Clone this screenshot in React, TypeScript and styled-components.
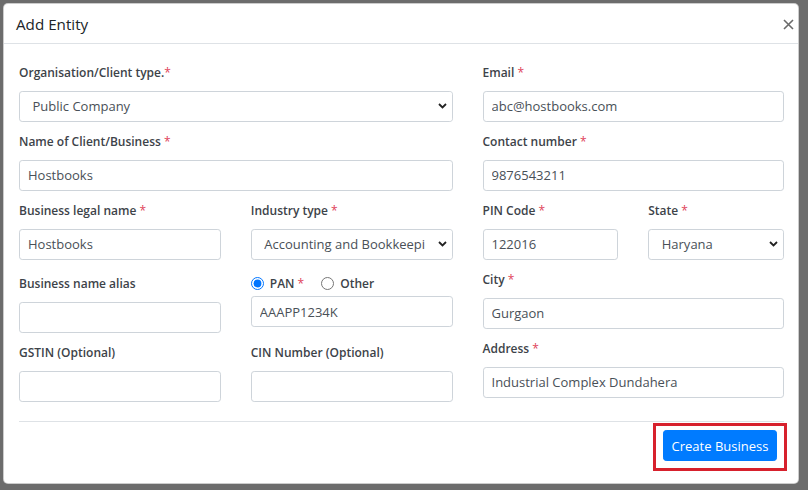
import React, { useState } from 'react';
import styled, { createGlobalStyle } from 'styled-components';

const GlobalStyle = createGlobalStyle`
  html, body {
    margin: 0;
    padding: 0;
    background: #6c6c6c;
  }
  * {
    box-sizing: border-box;
  }
`;

const FONT = `"Open Sans", "Noto Sans", "Liberation Sans", sans-serif`;

const Backdrop = styled.div`
  width: 808px;
  height: 490px;
  padding: 3px 0 0 3px;
  background: #6c6c6c;
  font-family: ${FONT};
  overflow: hidden;
`;

const Modal = styled.div`
  width: 796px;
  background: #fff;
  border: 1px solid rgba(0, 0, 0, 0.2);
  border-radius: 5px;
  color: #212529;
`;

const Header = styled.div`
  display: flex;
  align-items: center;
  justify-content: space-between;
  padding: 8px 0 7px 12px;
  border-bottom: 1px solid #dee2e6;
`;

const Title = styled.h5`
  margin: 0;
  font-size: 15.2px;
  line-height: 24px;
  font-weight: 400;
  color: #212529;
`;

const CloseButton = styled.button`
  width: 19px;
  height: 24px;
  padding: 0;
  border: none;
  background: transparent;
  display: flex;
  align-items: center;
  justify-content: center;
  cursor: pointer;
`;

const Body = styled.div`
  padding: 19px 14px 0 15px;
`;

const Columns = styled.div`
  display: grid;
  grid-template-columns: 433.5fr 301.5fr;
  column-gap: 30px;
  align-items: start;
`;

const Column = styled.div`
  display: flex;
  flex-direction: column;
`;

const Row = styled.div`
  display: grid;
  grid-template-columns: 1fr 1fr;
  column-gap: 30px;
  align-items: start;
`;

const Field = styled.div`
  display: flex;
  flex-direction: column;
  margin-bottom: 10.5px;
`;

const Label = styled.label<{ $offset?: number }>`
  display: block;
  margin: ${({ $offset }) => $offset || 0}px 0 8px;
  font-size: 12px;
  line-height: 19.5px;
  font-weight: 600;
  color: #3d4349;
  white-space: nowrap;
`;

const Req = styled.span`
  color: #e0435a;
  font-weight: 400;
`;

const Input = styled.input`
  height: 31px;
  width: 100%;
  padding: 0 8px;
  border: 1px solid #ced4da;
  border-radius: 3.2px;
  font-family: ${FONT};
  font-size: 13px;
  color: #495057;
  background: #fff;
  outline: none;
`;

const SelectWrap = styled.div`
  position: relative;
  width: 100%;
`;

// covers the end of long option text and carries the arrow
const Arrow = styled.span`
  position: absolute;
  top: 1px;
  right: 1px;
  bottom: 1px;
  width: 27px;
  display: flex;
  align-items: center;
  justify-content: flex-end;
  padding-right: 5px;
  background: #fff;
  border-radius: 0 3px 3px 0;
  pointer-events: none;
`;

const Select = styled.select`
  appearance: none;
  -webkit-appearance: none;
  height: 31px;
  width: 100%;
  padding: 0 27px 0 12.5px;
  border: 1px solid #ced4da;
  border-radius: 3.2px;
  font-family: ${FONT};
  font-size: 13px;
  color: #495057;
  background: #fff;
  outline: none;
`;

const RadioLine = styled.div`
  display: flex;
  align-items: center;
  height: 26px;
`;

const RadioOption = styled.label<{ $gap?: number }>`
  display: flex;
  align-items: center;
  margin-right: ${({ $gap }) => $gap || 0}px;
  font-size: 12px;
  font-weight: 600;
  color: #3d4349;
  & input {
    width: 13px;
    height: 13px;
    margin: 0 6px 0 0;
    accent-color: #0075ff;
  }
`;

const Divider = styled.hr`
  margin: 9px 0 0;
  border: none;
  border-top: 1px solid #dee2e6;
`;

const Footer = styled.div`
  display: flex;
  justify-content: flex-end;
  padding: 8px 7px 22px 0;
`;

const Highlight = styled.span`
  position: relative;
  display: inline-flex;
  &::after {
    content: '';
    position: absolute;
    top: -7.5px;
    left: -10.5px;
    right: -9.5px;
    bottom: -9.5px;
    border: 3px solid #d7212d;
    pointer-events: none;
  }
`;

const PrimaryButton = styled.button`
  height: 31px;
  width: 114px;
  padding: 0;
  border: 1px solid #007bff;
  border-radius: 3.2px;
  background: #007bff;
  color: #fff;
  font-family: ${FONT};
  font-size: 13px;
  cursor: pointer;
`;

const Chevron = () => (
  <svg width="9" height="6" viewBox="0 0 9 6">
    <path d="M1 1l3.5 3.5L8 1" fill="none" stroke="#222" strokeWidth="1.8" />
  </svg>
);

const TextField = ({
  label,
  value,
  required,
  offset,
}: {
  label: string;
  value?: string;
  required?: boolean;
  offset?: number;
}) => (
  <Field>
    <Label $offset={offset}>
      {label}
      {required && <Req> *</Req>}
    </Label>
    <Input defaultValue={value || ''} />
  </Field>
);

const SelectField = ({
  label,
  value,
  options,
  star,
}: {
  label: string;
  value: string;
  options: string[];
  star: string;
}) => (
  <Field>
    <Label>
      {label}
      <Req>{star}</Req>
    </Label>
    <SelectWrap>
      <Select defaultValue={value}>
        {options.map((o) => (
          <option key={o}>{o}</option>
        ))}
      </Select>
      <Arrow>
        <Chevron />
      </Arrow>
    </SelectWrap>
  </Field>
);

const App = () => {
  const [idType, setIdType] = useState<'pan' | 'other'>('pan');
  return (
    <Backdrop>
      <GlobalStyle />
      <Modal>
        <Header>
          <Title>Add Entity</Title>
          <CloseButton aria-label="Close">
            <svg width="11" height="11" viewBox="0 0 11 11">
              <path d="M1 1l9 9M10 1l-9 9" stroke="#6a6a6a" strokeWidth="1.6" />
            </svg>
          </CloseButton>
        </Header>
        <Body>
          <Columns>
            <Column>
              <SelectField
                label="Organisation/Client type."
                star="*"
                value="Public Company"
                options={['Public Company', 'Private Company', 'Partnership', 'Proprietorship']}
              />
              <TextField label="Name of Client/Business" value="Hostbooks" required />
              <Row>
                <TextField label="Business legal name" value="Hostbooks" required />
                <SelectField
                  label="Industry type"
                  star=" *"
                  value="Accounting and Bookkeeping"
                  options={['Accounting and Bookkeeping', 'Manufacturing', 'Retail']}
                />
              </Row>
              <Row>
                <TextField label="Business name alias" offset={4} />
                <Field>
                  <RadioLine>
                    <RadioOption $gap={17}>
                      <input
                        type="radio"
                        name="idType"
                        checked={idType === 'pan'}
                        onChange={() => setIdType('pan')}
                      />
                      PAN<Req>&nbsp;*</Req>
                    </RadioOption>
                    <RadioOption>
                      <input
                        type="radio"
                        name="idType"
                        checked={idType === 'other'}
                        onChange={() => setIdType('other')}
                      />
                      Other
                    </RadioOption>
                  </RadioLine>
                  <Input defaultValue="AAAPP1234K" />
                </Field>
              </Row>
              <Row>
                <TextField label="GSTIN (Optional)" />
                <TextField label="CIN Number (Optional)" />
              </Row>
            </Column>
            <Column>
              <TextField label="Email" value="abc@hostbooks.com" required />
              <TextField label="Contact number" value="9876543211" required />
              <Row>
                <TextField label="PIN Code" value="122016" required />
                <SelectField
                  label="State"
                  star=" *"
                  value="Haryana"
                  options={['Haryana', 'Delhi', 'Punjab']}
                />
              </Row>
              <TextField label="City" value="Gurgaon" required />
              <TextField label="Address" value="Industrial Complex Dundahera" required />
            </Column>
          </Columns>
          <Divider />
          <Footer>
            <Highlight>
              <PrimaryButton>Create Business</PrimaryButton>
            </Highlight>
          </Footer>
        </Body>
      </Modal>
    </Backdrop>
  );
};

export default App;
